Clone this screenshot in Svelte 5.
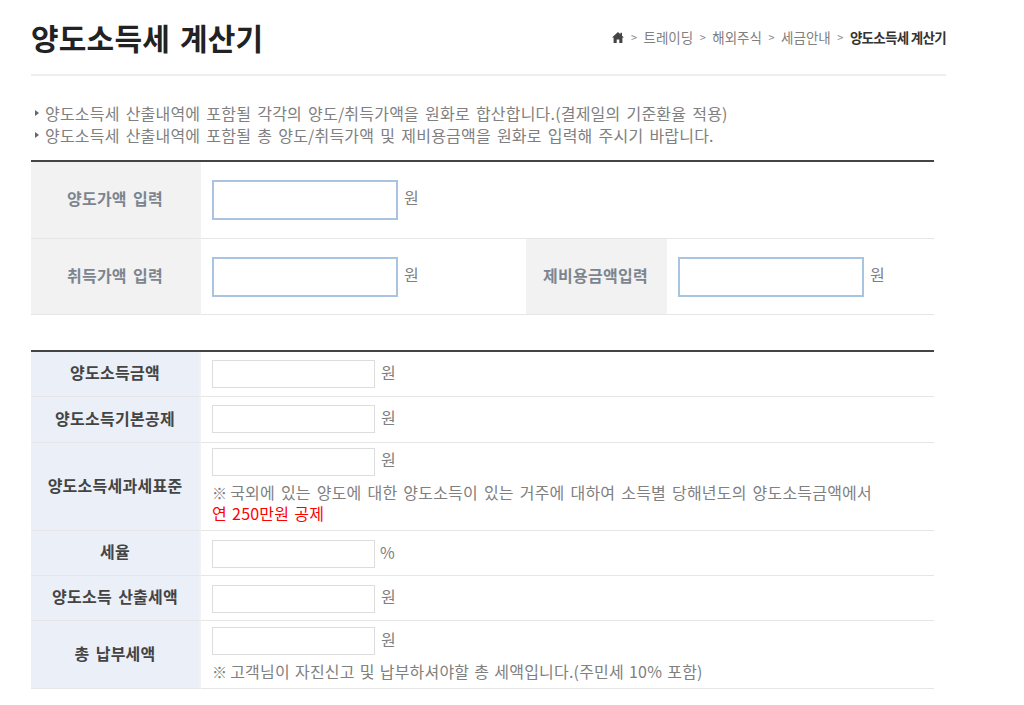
<script>
  const results = [
    { label: '양도소득금액', unit: '원', cls: 'r1' },
    { label: '양도소득기본공제', unit: '원', cls: 'r2' },
    { label: '양도소득세과세표준', unit: '원', cls: 'r3', note: '국외에 있는 양도에 대한 양도소득이 있는 거주에 대하여 소득별 당해년도의 양도소득금액에서', red: '연 250만원 공제' },
    { label: '세율', unit: '%', cls: 'r4' },
    { label: '양도소득 산출세액', unit: '원', cls: 'r5' },
    { label: '총 납부세액', unit: '원', cls: 'r6', note: '고객님이 자진신고 및 납부하셔야할 총 세액입니다.(주민세 10% 포함)' }
  ];
</script>

<div class="page">
  <header class="head">
    <h1>양도소득세 계산기</h1>
    <nav class="crumbs">
      <svg class="home" viewBox="0 0 12 11" width="12" height="11" aria-hidden="true">
        <path d="M6 0 L8.4 2.2 L8.4 0.8 L10 0.8 L10 3.7 L12 5.6 L10.4 5.6 L10.4 11 L7.3 11 L7.3 7.4 L4.7 7.4 L4.7 11 L1.6 11 L1.6 5.6 L0 5.6 Z" fill="#444" />
      </svg>
      <span class="sep">&gt;</span><span class="c">트레이딩</span>
      <span class="sep">&gt;</span><span class="c">해외주식</span>
      <span class="sep">&gt;</span><span class="c">세금안내</span>
      <span class="sep">&gt;</span><strong>양도소득세 계산기</strong>
    </nav>
  </header>

  <ul class="notes">
    <li>양도소득세 산출내역에 포함될 각각의 양도/취득가액을 원화로 합산합니다.(결제일의 기준환율 적용)</li>
    <li>양도소득세 산출내역에 포함될 총 양도/취득가액 및 제비용금액을 원화로 입력해 주시기 바랍니다.</li>
  </ul>

  <table class="t input-table">
    <colgroup><col class="c1" /><col class="c2" /><col class="c3" /><col /></colgroup>
    <tbody>
      <tr class="first">
        <th>양도가액 입력</th>
        <td colspan="3"><span class="field big"></span><span class="unit">원</span></td>
      </tr>
      <tr>
        <th>취득가액 입력</th>
        <td><span class="field big"></span><span class="unit">원</span></td>
        <th>제비용금액입력</th>
        <td><span class="field big"></span><span class="unit">원</span></td>
      </tr>
    </tbody>
  </table>

  <table class="t result-table">
    <colgroup><col class="c1" /><col /></colgroup>
    <tbody>
      {#each results as r}
        <tr class={r.cls}>
          <th>{r.label}</th>
          <td>
            <div class="line"><span class="field small"></span><span class="unit" class:pct={r.unit === '%'}>{r.unit}</span></div>
            {#if r.note}<p class="note"><span class="mark">※</span>{r.note}</p>{/if}
            {#if r.red}<p class="note red">{r.red}</p>{/if}
          </td>
        </tr>
      {/each}
    </tbody>
  </table>
</div>

<style>
  :global(body) {
    margin: 0;
    background: #fff;
    font-family: "Noto Sans CJK KR", "Noto Sans", sans-serif;
  }
  .page {
    width: 915px;
    margin-left: 31px;
    height: 705px;
    overflow: hidden;
  }
  .head {
    height: 74px;
    border-bottom: 2px solid #eee;
    display: flex;
    justify-content: space-between;
    align-items: flex-start;
  }
  h1 {
    margin: 14px 0 0;
    font-size: 30px;
    line-height: 46px;
    font-weight: 700;
    color: #222;
    letter-spacing: 0.2px;
    word-spacing: 3px;
  }
  .crumbs {
    margin-top: 26px;
    display: flex;
    align-items: center;
    font-size: 13.5px;
    line-height: 22px;
    color: #808080;
  }
  .home { margin-right: 7px; }
  .sep { margin-right: 6.5px; font-size: 11px; color: #888; }
  .c { margin-right: 6.5px; }
  .crumbs strong { color: #333; font-weight: 700; letter-spacing: -0.7px; }
  .notes {
    list-style: none;
    margin: 26px 0 0;
    padding: 0;
    font-size: 16px;
    line-height: 22px;
    color: #808080;
    letter-spacing: 0.2px;
    word-spacing: 2.3px;
  }
  .notes li { padding-left: 14px; position: relative; }
  .notes li::before {
    content: "";
    position: absolute;
    left: 4px;
    top: 8px;
    border-left: 4px solid #666;
    border-top: 3px solid transparent;
    border-bottom: 3px solid transparent;
  }
  .t {
    width: 903px;
    border-collapse: separate;
    border-spacing: 0;
    table-layout: fixed;
    border-top: 2px solid #444;
  }
  .c1 { width: 170px; }
  .c2 { width: 325px; }
  .c3 { width: 141px; }
  th, td {
    padding: 0;
    border-bottom: 1px solid #e6e6e6;
    font-size: 16px;
    line-height: 22px;
    vertical-align: middle;
  }
  td { padding-left: 11px; color: #808080; }
  th {
    font-weight: 700;
    text-align: center;
    border-right: 2px solid #f2f2f2;
    letter-spacing: 0.25px;
    word-spacing: 2.4px;
    padding-bottom: 4px;
  }
  .input-table { margin-top: 14px; }
  .input-table tr { height: 76px; }
  .input-table tr.first { height: 77px; }
  .input-table th { background: #f2f2f2; color: #7c858f; }
  .result-table { margin-top: 35px; }
  .result-table th { background: #ebf0f8; color: #444; }
  .result-table td { vertical-align: top; }
  .r1, .r4, .r5 { height: 45px; }
  .r2 { height: 46px; }
  .r3 { height: 88px; }
  .r6 { height: 68px; }
  .r1 td, .r2 td { padding-top: 8px; }
  .r4 td, .r5 td { padding-top: 9px; }
  .r3 td { padding-top: 5px; }
  .r6 td { padding-top: 6px; }
  .field { display: inline-block; box-sizing: border-box; background: #fff; vertical-align: middle; }
  .big { width: 186px; height: 40px; border: 2px solid #a8c4e0; }
  .small { width: 163px; height: 28px; border: 1px solid #ddd; }
  .unit { margin-left: 6px; vertical-align: middle; position: relative; top: -3px; color: #808080; }
  .r1 .unit, .r2 .unit, .r4 .unit, .r6 .unit { top: -2px; }
  .unit.pct { margin-left: 5px; }
  .line { display: flex; align-items: center; }
  .note { margin: 0; font-size: 16px; line-height: 21px; color: #808080; letter-spacing: 0.2px; word-spacing: 2.2px; }
  .mark { font-size: 15px; margin-right: 3px; }
  .line + .note { margin-top: 6px; }
  .r6 .note { word-spacing: 1.3px; }
  .note.red { color: #f00; word-spacing: 1.4px; }
</style>
